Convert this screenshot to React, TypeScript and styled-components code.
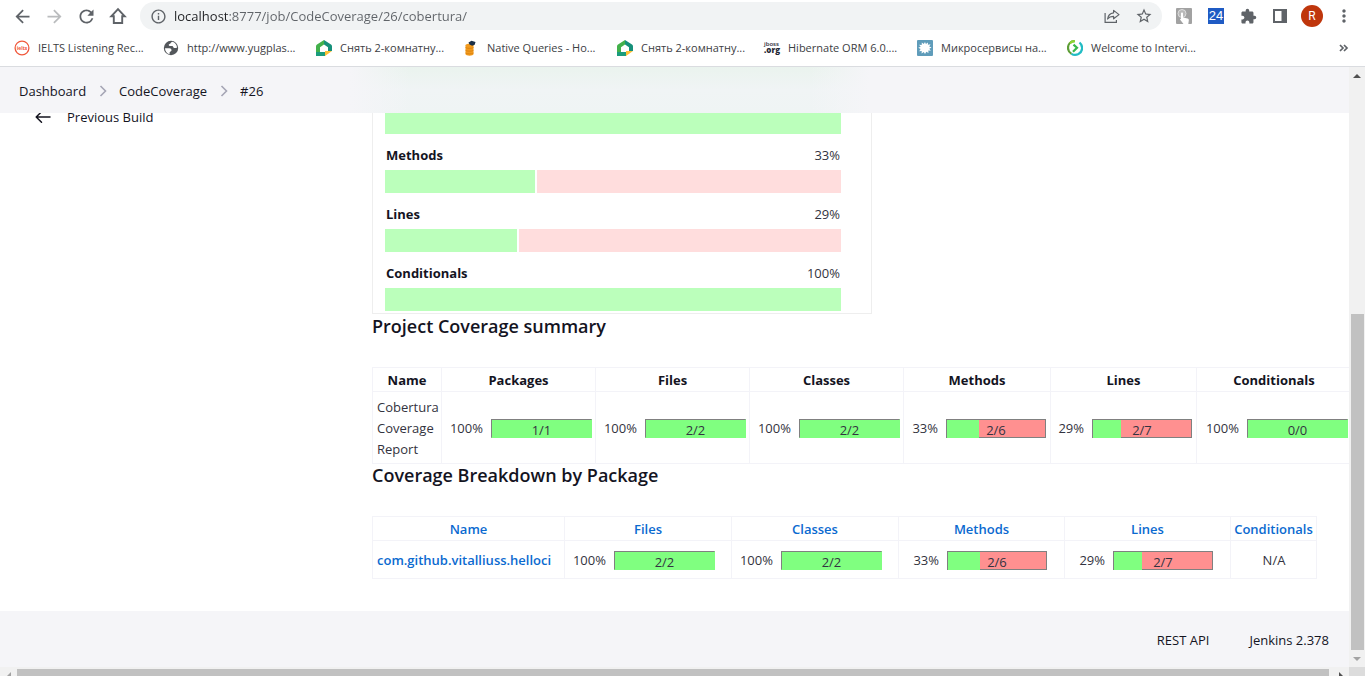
import React from "react";
import styled, { createGlobalStyle } from "styled-components";
import {
  MdArrowBack,
  MdArrowForward,
  MdRefresh,
  MdInfoOutline,
  MdStarBorder,
  MdExtension,
  MdMoreVert,
} from "react-icons/md";

const GlobalStyle = createGlobalStyle`
  * { box-sizing: border-box; }
  body {
    margin: 0;
    background: #fff;
    color: #14141f;
    font-family: "Open Sans", "Noto Sans", sans-serif;
    font-size: 13px;
    line-height: 21px;
  }
  a { color: inherit; text-decoration: none; }
  button { border: 0; padding: 0; background: none; font: inherit; color: inherit; cursor: pointer; }
  svg { display: block; flex: none; }
`;

/* ---------- Browser window ---------- */

const Window = styled.div`
  display: flex;
  flex-direction: column;
  height: 100vh;
  overflow: hidden;
`;

const Toolbar = styled.div`
  display: flex;
  align-items: center;
  height: 32px;
  flex: none;
  padding: 0 5px 0 6px;
  color: #5f6368;
`;

const ToolButton = styled.button<{ $faded?: boolean }>`
  display: flex;
  align-items: center;
  justify-content: center;
  width: 32px;
  height: 28px;
  color: ${(p) => (p.$faded ? "#babcbe" : "#5f6368")};
`;

const AddressBar = styled.div`
  display: flex;
  align-items: center;
  flex: 1;
  min-width: 0;
  height: 28px;
  margin: 0 6px;
  padding: 0 2px;
  border-radius: 14px;
  background: #f1f3f4;
`;

const Address = styled.input`
  flex: 1;
  min-width: 0;
  height: 28px;
  border: 0;
  padding: 0;
  outline: 0;
  font: inherit;
  font-size: 13px;
  color: transparent;
  background: linear-gradient(90deg, #202124 55px, #5f6368 55px);
  -webkit-background-clip: text;
  background-clip: text;
`;

const Tile = styled.span`
  display: flex;
  align-items: center;
  justify-content: center;
  width: 16px;
  height: 16px;
  background: #1f5bc4;
  color: #fff;
  font-family: "Liberation Sans", sans-serif;
  font-size: 13px;
  line-height: 16px;
`;

const Avatar = styled.span`
  display: flex;
  align-items: center;
  justify-content: center;
  width: 22px;
  height: 22px;
  border-radius: 50%;
  background: #bf360c;
  color: #fff;
  font-family: Roboto, sans-serif;
  font-size: 12px;
`;

const Bookmarks = styled.nav`
  display: flex;
  align-items: center;
  height: 35px;
  flex: none;
  padding: 0 16px 3px 14px;
  border-bottom: 1px solid #dadce0;
  color: #3c4043;
`;

const Bookmark = styled.a<{ $width: number }>`
  display: flex;
  align-items: center;
  gap: 8px;
  width: ${(p) => p.$width}px;
  font-size: 11px;
  white-space: nowrap;
`;

const More = styled.button`
  margin-left: auto;
  color: #5f6368;
`;

const Viewport = styled.div`
  display: grid;
  grid-template-columns: minmax(0, 1fr) 16px;
  grid-template-rows: minmax(0, 1fr) 9px;
  flex: 1;
  min-height: 0;
`;

const VerticalTrack = styled.div`
  display: flex;
  flex-direction: column;
  align-items: center;
  background: #f1f1f1;
`;

const HorizontalTrack = styled.div`
  display: flex;
  overflow: hidden;
  background: #f1f1f1;
`;

const Arrow = styled.span`
  display: flex;
  align-items: center;
  justify-content: center;
  flex: none;
  width: 17px;
  height: 17px;
`;

const Gap = styled.div`
  flex: 230;
`;

const VerticalThumb = styled.div`
  flex: 336;
  width: 13px;
  background: #c1c1c1;
`;

const HorizontalThumb = styled.div`
  flex: 1;
  height: 13px;
  margin: 2px 3px 0 0;
  background: #c1c1c1;
`;

const Corner = styled.div`
  background: #dcdcdc;
`;

/* ---------- Jenkins page ---------- */

const Page = styled.div`
  display: flex;
  flex-direction: column;
  overflow: hidden;
`;

const Breadcrumbs = styled.nav`
  position: relative;
  z-index: 1;
  display: flex;
  align-items: center;
  flex: none;
  height: 46px;
  padding: 2px 19px 0;
  background:
    linear-gradient(90deg, #f5f5f8 350px, rgba(245, 245, 248, 0) 410px, rgba(245, 245, 248, 0) 810px, #f5f5f8 870px),
    linear-gradient(#eaf3ee, #f0f4f5 50%, #eff4f4);
`;

const Crumb = styled.a`
  font-weight: 500;
`;

const Separator = styled.span`
  display: flex;
  justify-content: center;
  width: 33px;
  color: #a5a5b5;
`;

const Content = styled.div`
  display: flex;
  flex: 1;
  min-height: 0;
  margin-top: -7px;
`;

const Sidebar = styled.aside`
  flex: none;
  width: 372px;
  padding-left: 35px;
`;

const Task = styled.a`
  display: flex;
  align-items: center;
  gap: 16px;
  height: 22px;
  font-weight: 500;
`;

const Main = styled.main`
  flex: 1;
  min-width: 0;
`;

const Chart = styled.section`
  width: 500px;
  margin-bottom: 1px;
  padding: 0 30px 2px 12px;
  border: 1px solid #eee;
  border-top: 0;
`;

const MetricLabel = styled.div`
  display: flex;
  justify-content: space-between;
  height: 36px;
  padding: 11px 1px 0;
`;

const Percent = styled.span`
  color: #333340;
`;

const MetricBar = styled.div`
  display: flex;
  gap: 2px;
  height: 23px;
`;

const MetricPart = styled.div<{ $share: number; $missed?: boolean }>`
  flex: ${(p) => p.$share};
  background: ${(p) => (p.$missed ? "#ffdddd" : "#bbffbb")};
`;

const FirstBar = styled(MetricBar)`
  height: 28px;
`;

const Heading = styled.h2`
  margin: 0;
  padding-bottom: 30px;
  font-size: 18px;
  font-weight: 600;
  line-height: 22px;
`;

const Table = styled.table<{ $width: number }>`
  width: ${(p) => p.$width}px;
  table-layout: fixed;
  border-collapse: collapse;
`;

const HeadCell = styled.th<{ $link?: boolean }>`
  height: 24px;
  padding: 2px 0 0;
  border: 1px solid #f3f3f8;
  font-weight: ${(p) => (p.$link ? 600 : 700)};
  color: ${(p) => (p.$link ? "#0b6ad0" : "#14141f")};
`;

const Cell = styled.td<{ $height: number; $right?: number; $center?: boolean }>`
  height: ${(p) => p.$height}px;
  padding: 2px ${(p) => p.$right ?? 3}px 0 4px;
  border: 1px solid #f3f3f8;
  color: #333340;
  text-align: ${(p) => (p.$center ? "center" : "left")};
`;

const PackageLink = styled.a`
  font-weight: 600;
  color: #0b6ad0;
`;

const Coverage = styled.div`
  display: flex;
  align-items: center;
  justify-content: flex-end;
  gap: 8px;
`;

const Gauge = styled.div<{ $full: boolean }>`
  display: grid;
  width: ${(p) => (p.$full ? 101 : 100)}px;
  height: 19px;
  margin-right: ${(p) => (p.$full ? 0 : 1)}px;
  border: 1px solid #808080;
  background: ${(p) => (p.$full ? "#80ff80" : "#ff9090")};
  ${(p) => p.$full && "border-right-color: #80ff80; border-bottom-color: #80ff80;"}
`;

const GaugeFill = styled.div`
  grid-area: 1 / 1;
  height: 18px;
  background: #80ff80;
`;

const GaugeText = styled.span`
  grid-area: 1 / 1;
  height: 17px;
  text-align: center;
  line-height: 21px;
`;

const Footer = styled.footer`
  display: flex;
  align-items: center;
  justify-content: flex-end;
  gap: 40px;
  flex: none;
  height: 56px;
  padding: 2px 20px 0;
  background: #f5f5f8;
  font-weight: 500;
`;

/* ---------- Icons ---------- */

const HomeIcon = () => (
  <svg width="18" height="18" viewBox="0 0 18 18" fill="none" stroke="currentColor" strokeWidth="1.9">
    <path d="M9 2.200 2.300 9.300h2.500V16h8.400V9.300h2.500z" />
  </svg>
);

const ShareIcon = () => (
  <svg width="16" height="16" viewBox="0 0 16 16" fill="none" stroke="currentColor" strokeWidth="1.2">
    <path d="M1.1 5v9.3h11.3v-2.2" />
    <path d="M9.6 2.4 15 6.6l-5.4 4.2V8.4C7 8.3 5 9.200 3.600 11c.4-3.600 2.600-5.800 6-6.200z" strokeLinejoin="round" />
  </svg>
);

const TouchIcon = () => (
  <svg width="16" height="16" viewBox="0 0 16 16">
    <rect width="16" height="16" rx="1" fill="#a2a2a2" />
    <circle cx="6" cy="5.500" r="4" fill="#b9b9b9" stroke="#dedede" />
    <path d="M5 5.500c0-1.300 2-1.300 2 0v4l4.500 1c1 .3 1.500 1 1.300 2L12.300 16H7.500L4 11.500c.2-1 1-.8 1-.8z" fill="#fff" />
  </svg>
);

const PanelIcon = () => (
  <svg width="14" height="14" viewBox="0 0 14 14">
    <path d="M0 0h14v14H0zM2 2v10h6.500V2z" fill="currentColor" fillRule="evenodd" />
  </svg>
);

const IeltsIcon = () => (
  <svg width="16" height="16" viewBox="0 0 16 16">
    <circle cx="8" cy="8" r="6.900" fill="#fff" stroke="#f0583c" strokeWidth="1.300" />
    <text x="8" y="10" textAnchor="middle" fontSize="5" fontWeight="700" fill="#f0583c" fontFamily="Open Sans, sans-serif">ielts</text>
  </svg>
);

const GlobeIcon = () => (
  <svg width="16" height="16" viewBox="0 0 16 16">
    <circle cx="8" cy="8" r="7.200" fill="#53575b" />
    <path d="M2 8.300h4.300c1.600 0 2.200.8 2.200 2.100 0 1-1.900 1-1.900 2.200v1.700C3.800 13.600 2 11.200 2 8.300z" fill="#fff" />
    <path d="M8 2.600c0 1.500-2 1.300-2.300 2.200-.2 1.500 1.700 1.200 3.400 1.300 1.300.1 1 1.900 2.200 2 1 .1 1.600-.6 2.800-.3-.1-2.800-2-5.300-4.700-6z" fill="#fff" />
  </svg>
);

const HouseIcon = () => (
  <svg width="16" height="16" viewBox="0 0 16 16">
    <path d="M8 0 1 4.600Q0 5.300 0 6.500V16h4V7.200L8 4.500z" fill="#43b14b" />
    <path d="M8 0v4.500l4 2.700V11h4V6.500q0-1.200-1-1.900z" fill="#16907a" />
    <path d="M0 12h9v4H0z" fill="#1a9c7c" />
    <path d="M9 16v-5h7z" fill="#fcc135" />
  </svg>
);

const QueryIcon = () => (
  <svg width="16" height="16" viewBox="0 0 16 16">
    <path d="M2.500 5.300c0-2 8-2 8 0v8.600c0 2.300-8 2.300-8 0z" fill="#f29a1d" />
    <path d="M2.500 7.500c1.500 1.200 6.500 1.200 8 0M2.500 10.300c1.500 1.200 6.500 1.200 8 0M2.500 13c1.500 1.200 6.500 1.200 8 0" fill="none" stroke="#d77f0c" strokeWidth=".8" />
    <path d="m5.500 2.500 3-1.800 4 1.300-.8 2.800-2.500.9-2.700-1.200z" fill="#1b3048" />
  </svg>
);

const JbossIcon = () => (
  <svg width="16" height="16" viewBox="0 0 16 16" overflow="visible" fontFamily="Open Sans, sans-serif" fill="#1e2633">
    <text fontWeight="600">
      <tspan x="0" y="6" fontSize="6">jboss</tspan>
      <tspan x="0" y="13" fontSize="8" fontWeight="800">.org</tspan>
    </text>
  </svg>
);

const SplatIcon = () => (
  <svg width="16" height="16" viewBox="0 0 16 16">
    <rect width="16" height="16" rx="1" fill="#5f9cba" />
    <path d="m8 2 .9 2L11 2.500l-.1 2.300 2.600-.5-1.300 2.200 2.300 1-2.200 1.200 1.500 2-2.500-.2.200 2.600-2.200-1.300L8 14l-1.200-2-2.200 1.500.1-2.600-2.500.4 1.400-2.200-2.300-1.300 2.400-1L2 4.700l2.700.2.100-2.500 2 1.600z" fill="#fff" />
  </svg>
);

const InterviewIcon = () => (
  <svg width="16" height="16" viewBox="0 0 16 16" fill="none" strokeWidth="2.200">
    <path d="M7.500 1.200C3.500 1.200 1 4.200 1 8c0 2.600 1.400 4.700 3.500 5.900" stroke="#5d9d36" />
    <path d="M3 3.300C4.300 1.800 6 1.200 8 1.200" stroke="#8ed431" />
    <path d="m6.500 4.600 3.500 3.200-4 4" stroke="#37b84a" />
    <path d="M12.500 2.500c4 3.500 3.200 9.300-1 11.500-2.500 1.200-5 1.100-7-.2" stroke="#22bcc4" />
  </svg>
);

const ChevronIcon = () => (
  <svg width="8" height="12" viewBox="0 0 8 12" fill="none" stroke="currentColor" strokeWidth="1.600">
    <path d="m1.500 1 5 5-5 5" />
  </svg>
);

const TaskArrowIcon = () => (
  <svg width="16" height="14" viewBox="0 0 16 14" fill="none" stroke="#14141f" strokeWidth="1.500" strokeLinecap="round" strokeLinejoin="round">
    <path d="M15 7H1.500M6.500 1.800 1.200 7l5.300 5.200" />
  </svg>
);

const MoreIcon = () => (
  <svg width="10" height="8" viewBox="0 0 10 8" fill="none" stroke="currentColor" strokeWidth="1.700">
    <path d="m1 1 3 3-3 3M5 1l3 3-3 3" />
  </svg>
);

const Triangle = ({ points, color }: { points: string; color: string }) => (
  <svg width="8" height="8" viewBox="0 0 8 8">
    <polygon points={points} fill={color} />
  </svg>
);

/* ---------- Data ---------- */

const bookmarks = [
  { label: "IELTS Listening Rec...", width: 149, icon: <IeltsIcon /> },
  { label: "http://www.yugplas...", width: 153, icon: <GlobeIcon /> },
  { label: "Снять 2-комнатну...", width: 147, icon: <HouseIcon /> },
  { label: "Native Queries - Ho...", width: 154, icon: <QueryIcon /> },
  { label: "Снять 2-комнатну...", width: 147, icon: <HouseIcon /> },
  { label: "Hibernate ORM 6.0....", width: 153, icon: <JbossIcon /> },
  { label: "Микросервисы на...", width: 150, icon: <SplatIcon /> },
  { label: "Welcome to Intervi...", width: 150, icon: <InterviewIcon /> },
];

const metrics = [
  { name: "Methods", percent: 33 },
  { name: "Lines", percent: 29 },
  { name: "Conditionals", percent: 100 },
];

type Ratio = { percent: number; ratio: string };

const summary: (Ratio & { name: string; width: number })[] = [
  { name: "Packages", percent: 100, ratio: "1/1", width: 154 },
  { name: "Files", percent: 100, ratio: "2/2", width: 154 },
  { name: "Classes", percent: 100, ratio: "2/2", width: 154 },
  { name: "Methods", percent: 33, ratio: "2/6", width: 147 },
  { name: "Lines", percent: 29, ratio: "2/7", width: 146 },
  { name: "Conditionals", percent: 100, ratio: "0/0", width: 155 },
];

const breakdown: (Ratio & { name: string; width: number })[] = [
  { name: "Files", percent: 100, ratio: "2/2", width: 167 },
  { name: "Classes", percent: 100, ratio: "2/2", width: 167 },
  { name: "Methods", percent: 33, ratio: "2/6", width: 166 },
  { name: "Lines", percent: 29, ratio: "2/7", width: 166 },
];

const CoverageGauge = ({ percent, ratio }: Ratio) => (
  <Coverage>
    <span>{percent}%</span>
    <Gauge $full={percent === 100}>
      <GaugeFill style={{ width: `${percent}%` }} />
      <GaugeText>{ratio}</GaugeText>
    </Gauge>
  </Coverage>
);

export default function App() {
  return (
    <Window>
      <GlobalStyle />
      <Toolbar>
        <ToolButton aria-label="Back"><MdArrowBack size={21} /></ToolButton>
        <ToolButton aria-label="Forward" $faded><MdArrowForward size={21} /></ToolButton>
        <ToolButton aria-label="Reload"><MdRefresh size={21} /></ToolButton>
        <ToolButton aria-label="Home"><HomeIcon /></ToolButton>
        <AddressBar>
          <ToolButton aria-label="Site information"><MdInfoOutline size={17} /></ToolButton>
          <Address aria-label="Address" defaultValue="localhost:8777/job/CodeCoverage/26/cobertura/" />
          <ToolButton aria-label="Share"><ShareIcon /></ToolButton>
          <ToolButton aria-label="Bookmark this page"><MdStarBorder size={18} /></ToolButton>
        </AddressBar>
        <ToolButton aria-label="Touch extension"><TouchIcon /></ToolButton>
        <ToolButton><Tile>24</Tile></ToolButton>
        <ToolButton aria-label="Extensions"><MdExtension size={17} /></ToolButton>
        <ToolButton aria-label="Side panel"><PanelIcon /></ToolButton>
        <ToolButton><Avatar>R</Avatar></ToolButton>
        <ToolButton aria-label="Menu"><MdMoreVert size={20} /></ToolButton>
      </Toolbar>
      <Bookmarks>
        {bookmarks.map((b, i) => (
          <Bookmark key={i} href="#" $width={b.width}>
            {b.icon}
            {b.label}
          </Bookmark>
        ))}
        <More aria-label="More bookmarks"><MoreIcon /></More>
      </Bookmarks>

      <Viewport>
        <Page>
          <Breadcrumbs>
            <Crumb href="#">Dashboard</Crumb>
            <Separator><ChevronIcon /></Separator>
            <Crumb href="#">CodeCoverage</Crumb>
            <Separator><ChevronIcon /></Separator>
            <Crumb href="#">#26</Crumb>
          </Breadcrumbs>

          <Content>
            <Sidebar>
              <Task href="#"><TaskArrowIcon />Previous Build</Task>
            </Sidebar>
            <Main>
              <Chart>
                <FirstBar><MetricPart $share={100} /></FirstBar>
                {metrics.map((m) => (
                  <React.Fragment key={m.name}>
                    <MetricLabel>
                      <b>{m.name}</b>
                      <Percent>{m.percent}%</Percent>
                    </MetricLabel>
                    <MetricBar>
                      <MetricPart $share={m.percent} />
                      {m.percent < 100 && <MetricPart $share={100 - m.percent} $missed />}
                    </MetricBar>
                  </React.Fragment>
                ))}
              </Chart>

              <Heading>Project Coverage summary</Heading>
              <Table $width={979}>
                <colgroup>
                  <col width={69} />
                  {summary.map((c) => <col key={c.name} width={c.width} />)}
                </colgroup>
                <thead>
                  <tr>
                    <HeadCell>Name</HeadCell>
                    {summary.map((c) => <HeadCell key={c.name}>{c.name}</HeadCell>)}
                  </tr>
                </thead>
                <tbody>
                  <tr>
                    <Cell $height={72}>Cobertura Coverage Report</Cell>
                    {summary.map((c) => (
                      <Cell key={c.name} $height={72}>
                        <CoverageGauge percent={c.percent} ratio={c.ratio} />
                      </Cell>
                    ))}
                  </tr>
                </tbody>
              </Table>

              <Heading>Coverage Breakdown by Package</Heading>
              <Table $width={944}>
                <colgroup>
                  <col width={192} />
                  {breakdown.map((c) => <col key={c.name} width={c.width} />)}
                  <col width={86} />
                </colgroup>
                <thead>
                  <tr>
                    <HeadCell $link><a href="#">Name</a></HeadCell>
                    {breakdown.map((c) => (
                      <HeadCell key={c.name} $link><a href="#">{c.name}</a></HeadCell>
                    ))}
                    <HeadCell $link><a href="#">Conditionals</a></HeadCell>
                  </tr>
                </thead>
                <tbody>
                  <tr>
                    <Cell $height={38}><PackageLink href="#">com.github.vitalliuss.helloci</PackageLink></Cell>
                    {breakdown.map((c) => (
                      <Cell key={c.name} $height={38} $right={16}>
                        <CoverageGauge percent={c.percent} ratio={c.ratio} />
                      </Cell>
                    ))}
                    <Cell $height={38} $center>N/A</Cell>
                  </tr>
                </tbody>
              </Table>
            </Main>
          </Content>

          <Footer>
            <a href="#">REST API</a>
            <a href="#">Jenkins 2.378</a>
          </Footer>
        </Page>
        <VerticalTrack>
          <Arrow><Triangle points="0,6 4,2 8,6" color="#505050" /></Arrow>
          <Gap />
          <VerticalThumb />
          <Arrow><Triangle points="0,2 4,6 8,2" color="#a3a3a3" /></Arrow>
        </VerticalTrack>
        <HorizontalTrack>
          <Arrow><Triangle points="6,0 2,4 6,8" color="#a3a3a3" /></Arrow>
          <HorizontalThumb />
          <Arrow><Triangle points="2,0 6,4 2,8" color="#505050" /></Arrow>
        </HorizontalTrack>
        <Corner />
      </Viewport>
    </Window>
  );
}
